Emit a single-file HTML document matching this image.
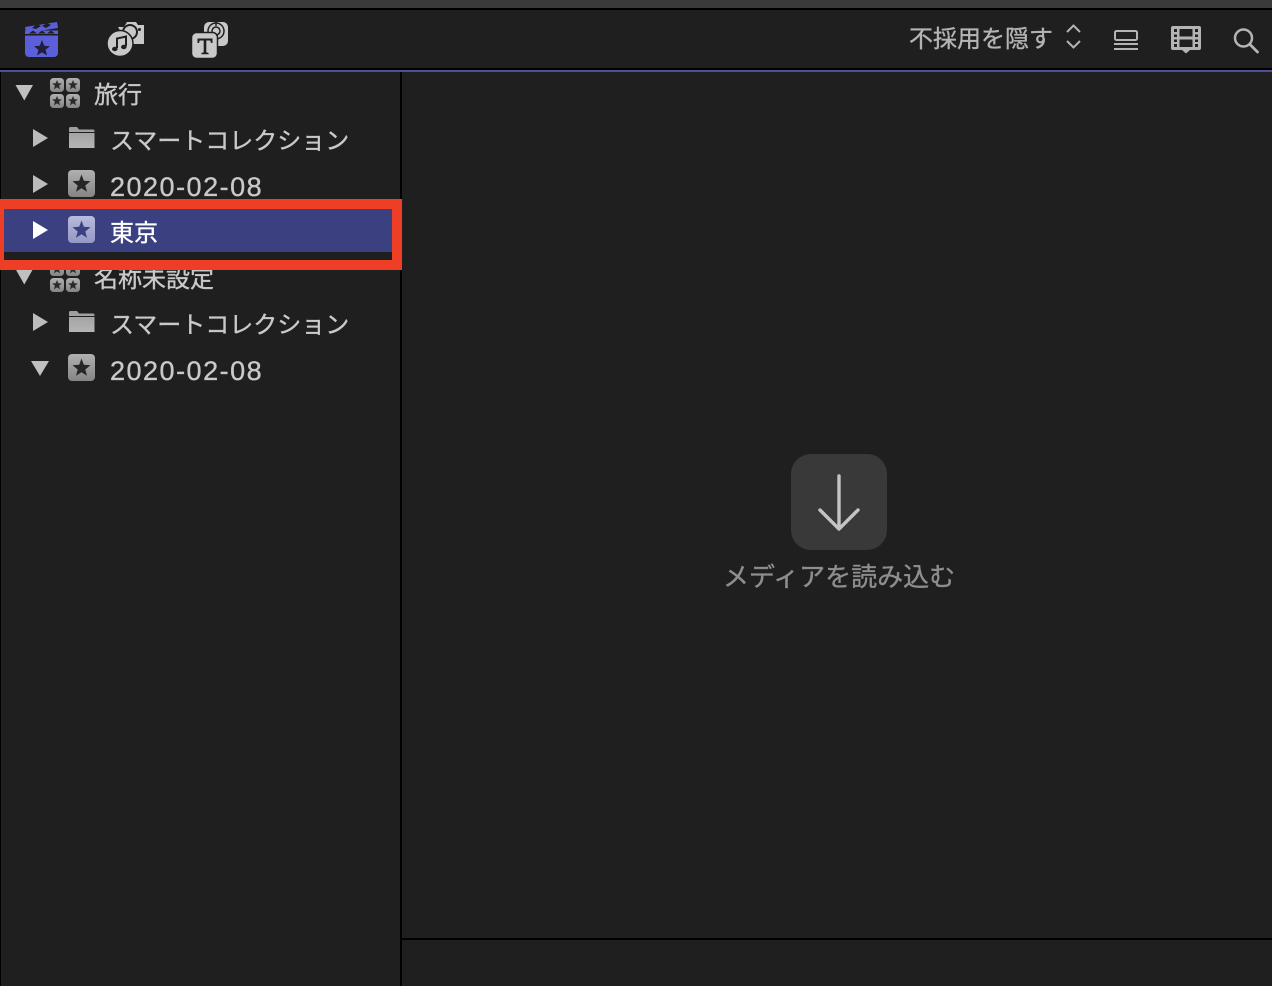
<!DOCTYPE html>
<html lang="ja"><head><meta charset="utf-8"><style>
html,body{margin:0;padding:0;width:1272px;height:986px;overflow:hidden;background:#1f1f1f}
body{position:relative;font-family:"Liberation Sans","Noto Sans CJK JP",sans-serif}
.a{position:absolute}
.t{position:absolute;font-size:24px;line-height:32px;color:#c9c9c9;white-space:nowrap;font-weight:400;-webkit-text-stroke:.35px currentColor}
.d{font-size:27px;letter-spacing:1.5px}
svg{position:absolute;overflow:visible}
</style></head><body>
<div class="a" style="left:0;top:0;width:1272px;height:8px;background:#3a3a3a"></div>
<div class="a" style="left:0;top:8px;width:1272px;height:2px;background:#000"></div>
<div class="a" style="left:0;top:68px;width:1272px;height:2px;background:#000"></div>
<div class="a" style="left:0;top:70px;width:1272px;height:2px;background:#4d5099"></div>
<div class="a" style="left:0;top:72px;width:1px;height:914px;background:#000"></div>
<div class="a" style="left:400px;top:72px;width:2px;height:914px;background:#000"></div>
<div class="a" style="left:402px;top:938px;width:870px;height:2px;background:#000"></div>

<svg style="left:0;top:0" width="260" height="70" viewBox="0 0 260 70">
<path d="M25 30.500 58 30.500 58 34 25 34Z" fill="#5b5fd9"/>
<path d="M25 35.500H58V53a4 4 0 0 1-4 4H29a4 4 0 0 1-4-4Z" fill="#5b5fd9"/>
<path d="M25 27 57 22 58 28 26 33Z" fill="#5b5fd9"/>
<path d="M29 33.500 33 30.500 37 33.500ZM38 33.500 42 30.500 46 33.500ZM47 33.500 51 30.500 55 33.500ZM32 28 37 24 41 26 36 29ZM42 26 47 23 51 25 46 28Z" fill="#1f1f1f"/>
<path d="M25 34H58V35.500H25Z" fill="#1f1f1f"/>
<path d="M42 40 44.300 45.800 50 46.200 45.600 49.800 47 55.400 42 52.400 37 55.400 38.400 49.800 34 46.200 39.700 45.800Z" fill="#20203c"/>

<path d="M118 27H124L127 22H136L138 25H144V44H128Z" fill="#c8c8c8"/>
<circle cx="130" cy="32" r="7" fill="#c8c8c8" stroke="#1f1f1f" stroke-width="2"/>
<circle cx="120" cy="43.500" r="13" fill="#c8c8c8" stroke="#1f1f1f" stroke-width="1.500"/>
<circle cx="139.500" cy="29.500" r="1.500" fill="#1f1f1f"/>
<path d="M117 48V38.500L126 36.500V46" fill="none" stroke="#1f1f1f" stroke-width="2"/>
<ellipse cx="114.800" cy="49" rx="2.800" ry="2.200" fill="#1f1f1f"/>
<ellipse cx="123.800" cy="47" rx="2.800" ry="2.200" fill="#1f1f1f"/>

<rect x="204" y="22" width="24" height="24" rx="5" fill="#c8c8c8"/>
<circle cx="216" cy="31" r="8" fill="none" stroke="#1f1f1f" stroke-width="1.500"/>
<circle cx="216" cy="31" r="4" fill="none" stroke="#1f1f1f" stroke-width="1.500"/>
<path d="M216 22V26" stroke="#1f1f1f" stroke-width="1.500"/>
<rect x="191.500" y="32.500" width="26" height="26" rx="5" fill="#c8c8c8" stroke="#1f1f1f" stroke-width="1.500"/>
<path d="M197.500 38.500H212.500V43H211L210.300 40.500H206.300V52.300L208.600 53V54.300H201.400V53L203.700 52.300V40.500H199.700L199 43H197.500Z" fill="#1f1f1f"/>
</svg>

<svg style="left:890px;top:0" width="382" height="70" viewBox="890 0 382 70">
<path d="M1067 32 1073.500 25.500 1080 32M1067 41 1073.500 47.500 1080 41" fill="none" stroke="#b4b4b4" stroke-width="2"/>
<rect x="1115" y="31" width="22" height="9" rx="1.500" fill="none" stroke="#b4b4b4" stroke-width="2"/>
<path d="M1114 44H1138M1114 49H1138" stroke="#b4b4b4" stroke-width="2"/>
<path d="M1173 26H1199A2 2 0 0 1 1201 28V48A2 2 0 0 1 1199 50H1190L1186 53.500 1182 50H1173A2 2 0 0 1 1171 48V28A2 2 0 0 1 1173 26Z" fill="#b4b4b4"/>
<path d="M1179.500 29H1192.500V36.500H1179.500ZM1179.500 39.500H1192.500V47H1179.500ZM1174 29H1177V32H1174ZM1174 34.500H1177V37H1174ZM1174 39.500H1177V42H1174ZM1174 44H1177V47H1174ZM1195 29H1198V32H1195ZM1195 34.500H1198V37H1195ZM1195 39.500H1198V42H1195ZM1195 44H1198V47H1195Z" fill="#1f1f1f"/>
<circle cx="1243.500" cy="38" r="8.500" fill="none" stroke="#b4b4b4" stroke-width="2.500"/>
<path d="M1250 44.500 1257.500 52" stroke="#b4b4b4" stroke-width="2.800" stroke-linecap="round"/>
</svg>
<div class="t" style="left:909px;top:24px;color:#b4b4b4">不採用を隠す</div>

<div class="a" style="left:0;top:199px;width:402px;height:71px;background:#ee3e26"></div>
<div class="a" style="left:4px;top:209px;width:388px;height:43px;background:#3b4080"></div>
<div class="a" style="left:4px;top:252px;width:388px;height:8px;background:#1f1f1f"></div>

<svg style="left:0;top:0" width="402" height="400" viewBox="0 0 402 400">
<defs>
<linearGradient id="g" x1="0" y1="0" x2="0" y2="1"><stop offset="0" stop-color="#b0b0b0"/><stop offset="1" stop-color="#858585"/></linearGradient>
<linearGradient id="f" x1="0" y1="0" x2="0" y2="1"><stop offset="0" stop-color="#9c9c9c"/><stop offset="1" stop-color="#b5b5b5"/></linearGradient>
<linearGradient id="b" x1="0" y1="0" x2="0" y2="1"><stop offset="0" stop-color="#b7bbdc"/><stop offset="1" stop-color="#9498c5"/></linearGradient>
<path id="ss" d="M0-5 1.300-1.700 4.800-1.500 2.100.8 3 4.300 0 2.400-3 4.300-2.100.8-4.800-1.500-1.300-1.700Z"/>
<g id="sm"><rect width="14" height="14" rx="3.500" fill="url(#g)"/><use href="#ss" x="7" y="7" fill="#2a2a2a"/></g>
<g id="grid"><use href="#sm" x="50" y="0"/><use href="#sm" x="66" y="0"/><use href="#sm" x="50" y="16"/><use href="#sm" x="66" y="16"/></g>
<path id="fo" d="M69 128.500A1.500 1.500 0 0 1 70.500 127H77L79 129.500H93A1.500 1.500 0 0 1 94.500 131V132H69Z M69 133H94.500V148H69Z"/>
</defs>
<path d="M15.500 85H33L24.300 100.500Z" fill="#c0c0c0"/>
<use href="#grid" y="78"/>
<path d="M33 129 48 138 33 147Z" fill="#bcbcbc"/>
<use href="#fo" fill="url(#f)"/>
<path d="M33 175 48 184 33 193Z" fill="#bcbcbc"/>
<rect x="68" y="170" width="27" height="27" rx="4" fill="url(#g)"/>
<path d="M81.500 174.500 83.800 180.800 90.500 181.200 85.300 185.500 87 191.800 81.500 188.300 76 191.800 77.700 185.500 72.500 181.200 79.200 180.800Z" fill="#262626"/>
<path d="M33 221 48 230 33 239Z" fill="#fff"/>
<rect x="68" y="216" width="27" height="27" rx="4" fill="url(#b)"/>
<path d="M81.500 220.500 83.800 226.800 90.500 227.200 85.300 231.500 87 237.800 81.500 234.300 76 237.800 77.700 231.500 72.500 227.200 79.200 226.800Z" fill="#3b4080"/>
<clipPath id="c"><rect x="0" y="270" width="402" height="60"/></clipPath>
<g clip-path="url(#c)">
<path d="M15.500 269H33L24.300 284.500Z" fill="#c0c0c0"/>
<use href="#grid" y="262"/>
</g>
<path d="M33 313 48 322 33 331Z" fill="#bcbcbc"/>
<use href="#fo" y="184" fill="url(#f)"/>
<path d="M31 361H49L40 376Z" fill="#c0c0c0"/>
<rect x="68" y="354" width="27" height="27" rx="4" fill="url(#g)"/>
<path d="M81.500 358.500 83.800 364.800 90.500 365.200 85.300 369.500 87 375.800 81.500 372.300 76 375.800 77.700 369.500 72.500 365.200 79.200 364.800Z" fill="#262626"/>
</svg>

<div class="t" style="left:94px;top:80px">旅行</div>
<div class="t" style="left:110px;top:126px">スマートコレクション</div>
<div class="t d" style="left:110px;top:171px">2020-02-08</div>
<div class="t" style="left:110px;top:218px;color:#fff">東京</div>
<div class="a" style="left:0;top:270px;width:400px;height:26px;overflow:hidden"><div class="t" style="left:94px;top:-6px">名称未設定</div></div>
<div class="t" style="left:110px;top:310px">スマートコレクション</div>
<div class="t d" style="left:110px;top:355px">2020-02-08</div>

<div class="a" style="left:791px;top:454px;width:96px;height:96px;border-radius:20px;background:#393939"></div>
<svg style="left:791px;top:454px" width="96" height="96" viewBox="0 0 96 96">
<path d="M48 22V74M29 56 48 75 67 56" fill="none" stroke="#c4c4c4" stroke-width="3.400" stroke-linecap="round" stroke-linejoin="round"/>
</svg>
<div class="t" style="left:723px;top:561px;color:#8e8e8e;font-size:26px">メディアを読み込む</div>
</body></html>
